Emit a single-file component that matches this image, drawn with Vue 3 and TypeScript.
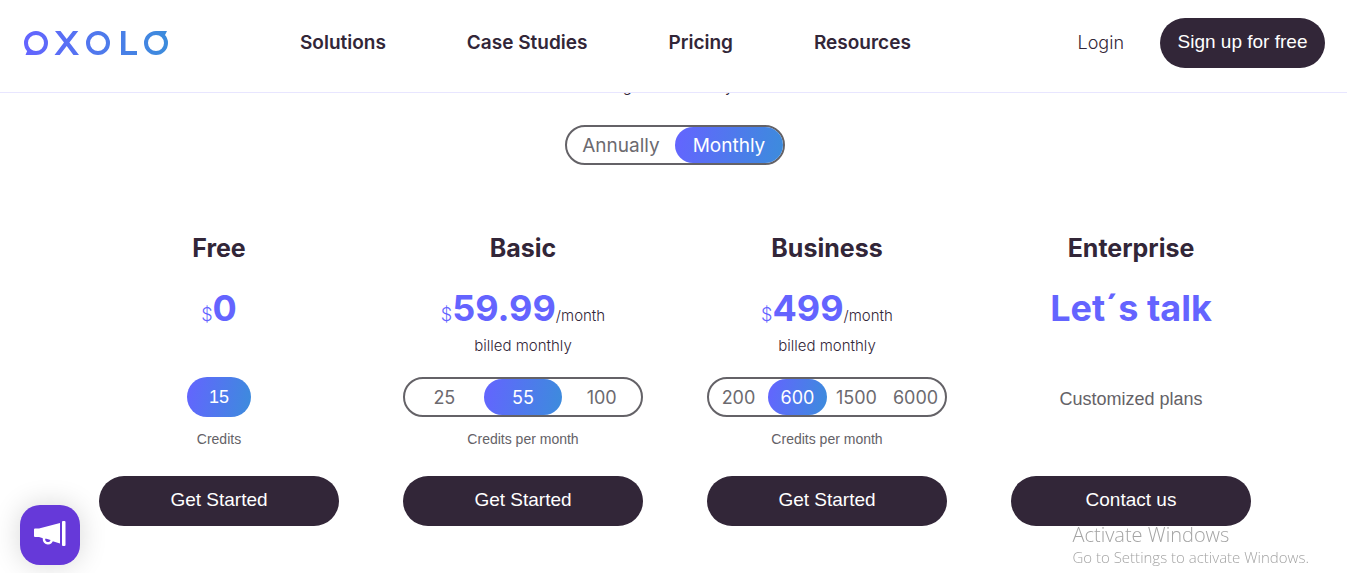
<script setup lang="ts">
import { ref } from 'vue'

interface Plan {
  id: string
  name: string
  currency?: string
  price: string
  period?: string
  billing?: string
  credits: number[]
  note: string
  action: string
}

const navigation = ['Solutions', 'Case Studies', 'Pricing', 'Resources']
const periods = ['Annually', 'Monthly']
const period = ref('Monthly')

const plans: Plan[] = [
  { id: 'free', name: 'Free', currency: '$', price: '0', credits: [15], note: 'Credits', action: 'Get Started' },
  { id: 'basic', name: 'Basic', currency: '$', price: '59.99', period: '/month', billing: 'billed monthly', credits: [25, 55, 100], note: 'Credits per month', action: 'Get Started' },
  { id: 'business', name: 'Business', currency: '$', price: '499', period: '/month', billing: 'billed monthly', credits: [200, 600, 1500, 6000], note: 'Credits per month', action: 'Get Started' },
  { id: 'enterprise', name: 'Enterprise', price: 'Let´s talk', credits: [], note: 'Customized plans', action: 'Contact us' },
]

const selected = ref<Record<string, number>>({ basic: 55, business: 600 })
</script>

<template>
  <div class="page">
    <header class="header">
      <a class="logo" href="#" aria-label="Oxolo">
        <svg width="144" height="24" viewBox="0 0 144 24" fill="none">
          <defs>
            <linearGradient id="brand" gradientUnits="userSpaceOnUse" x1="0" y1="0" x2="144" y2="0">
              <stop offset="0" stop-color="#6464ff" />
              <stop offset="1" stop-color="#3c8cdc" />
            </linearGradient>
          </defs>
          <g stroke="url(#brand)" stroke-width="4">
            <circle cx="12" cy="12" r="10" />
            <circle cx="74" cy="12" r="10" />
            <circle cx="132" cy="12" r="10" />
          </g>
          <g fill="url(#brand)">
            <path d="M12 24H1.500L4 18l3 1 5 2z" />
            <path d="M132 0h11l-3 6-3-2-5-1z" />
            <path d="M31 0h5.500l6.200 8.100L49 0h5.300l-8.900 11.500L55 24h-5.600l-6.700-9-7 9H30.500l9.500-12.500z" />
            <path d="M97 0h4.500v20H113v4H97z" />
          </g>
        </svg>
      </a>
      <nav class="nav">
        <a v-for="item in navigation" :key="item" href="#">{{ item }}</a>
      </nav>
      <div class="account">
        <a class="login" href="#">Login</a>
        <button class="button signup" type="button">Sign up for free</button>
      </div>
    </header>

    <main class="main">
      <p class="lead">Change or cancel anytime</p>

      <fieldset class="switch period-switch" aria-label="Billing period">
        <label v-for="option in periods" :key="option" class="option">
          <input v-model="period" type="radio" name="period" :value="option" />
          <span>{{ option }}</span>
        </label>
      </fieldset>

      <div class="plans">
        <section v-for="plan in plans" :key="plan.id" class="plan">
          <h2>{{ plan.name }}</h2>
          <p class="price">
            <span v-if="plan.currency" class="currency">{{ plan.currency }}</span><strong>{{ plan.price }}</strong><span v-if="plan.period" class="per">{{ plan.period }}</span>
          </p>
          <p class="billing">{{ plan.billing }}</p>
          <div class="allowance" :class="{ custom: !plan.credits.length }">
            <fieldset v-if="plan.credits.length > 1" class="switch" :aria-label="plan.name + ' credits'">
              <label v-for="amount in plan.credits" :key="amount" class="option">
                <input v-model="selected[plan.id]" type="radio" :name="plan.id" :value="amount" />
                <span>{{ amount }}</span>
              </label>
            </fieldset>
            <span v-else-if="plan.credits.length" class="badge">{{ plan.credits[0] }}</span>
            <p class="note">{{ plan.note }}</p>
          </div>
          <button class="button" type="button">{{ plan.action }}</button>
        </section>
      </div>
    </main>

    <button class="announce" type="button" aria-label="Announcements">
      <svg width="34" height="28" viewBox="0 0 34 28">
        <g fill="#fff">
          <path d="M1 8.500Q1 7.500 2 7.500H6L27 2v20.500L6 16H2q-1 0-1-1z" />
          <rect x="29" y="0" width="3.500" height="25" rx="1" />
        </g>
        <path d="M11 16.500v1.500a4 4 0 0 0 8 0.500" fill="none" stroke="#fff" stroke-width="2.500" />
        <path d="M12.500 17.500l5 1.500q-1 2-2.500 2-2.500-0.500-2.500-3.500z" fill="#6639d9" />
      </svg>
    </button>

    <aside class="watermark">
      <p class="watermark-title">Activate Windows</p>
      <p>Go to Settings to activate Windows.</p>
    </aside>
  </div>
</template>

<style>
body {
  margin: 0;
  background: #fff;
}
</style>

<style scoped>
.page {
  color: #322638;
  font-family: Inter, "Open Sans", sans-serif;
}

p, h2 {
  margin: 0;
}

a {
  color: inherit;
  text-decoration: none;
}

.header {
  position: sticky;
  top: 0;
  z-index: 2;
  display: flex;
  align-items: center;
  box-sizing: border-box;
  height: 93px;
  padding: 0 22px 7px 24px;
  background: #fff;
  border-bottom: 1px solid #e8e6ff;
}

.logo svg {
  display: block;
}

.nav {
  display: flex;
  gap: 81px;
  margin-left: 132px;
  font-size: 19px;
  font-weight: 600;
  line-height: 24px;
  white-space: nowrap;
}

.account {
  display: flex;
  align-items: center;
  gap: 36px;
  margin-left: auto;
}

.login {
  font-size: 18px;
  font-weight: 300;
}

.button {
  width: 100%;
  height: 50px;
  padding: 0 0 2px;
  border: 0;
  border-radius: 25px;
  background: #322638;
  color: #fff;
  font-family: "Liberation Sans", sans-serif;
  font-size: 19px;
  cursor: pointer;
}

.signup {
  width: 165px;
}

.main {
  display: flex;
  flex-direction: column;
  align-items: center;
  margin-top: -18px;
  padding: 0 96px 0 99px;
}

.lead {
  font-size: 14px;
  line-height: 24px;
}

.switch {
  display: flex;
  box-sizing: border-box;
  width: 100%;
  min-width: 0;
  height: 40px;
  margin: 0;
  padding: 0;
  border: 2px solid #646267;
  border-radius: 20px;
}

.period-switch {
  width: 220px;
  margin-top: 26px;
}

.period-switch .option {
  font-size: 19px;
}

.option {
  position: relative;
  flex: 1 1 0;
  min-width: 0;
  color: #6c6a6f;
  font-size: 18px;
  font-weight: 400;
  line-height: 38px;
  text-align: center;
  cursor: pointer;
}

.option input {
  position: absolute;
  inset: 0;
  margin: 0;
  opacity: 0;
}

.option span {
  display: block;
  height: 36px;
  border-radius: 18px;
}

.option input:checked + span {
  background: linear-gradient(100deg, #6464ff, #3c8cdc);
  color: #fff;
}

.plans {
  display: grid;
  grid-template-columns: repeat(4, minmax(0, 1fr));
  gap: 64px;
  width: 100%;
  margin-top: 65px;
}

.plan {
  display: flex;
  flex-direction: column;
  align-items: center;
  text-align: center;
}

h2 {
  font-size: 25px;
  font-weight: 700;
  line-height: 36px;
}

.price {
  height: 36px;
  margin-top: 24px;
  line-height: 36px;
  white-space: nowrap;
}

.price strong {
  color: #6464ff;
  font-size: 36px;
  font-weight: 700;
}

.currency {
  color: #6464ff;
  font-size: 18px;
  font-weight: 300;
}

.per {
  font-size: 15px;
  font-weight: 300;
}

.billing {
  height: 24px;
  margin-top: 8px;
  font-size: 15px;
  font-weight: 300;
  line-height: 24px;
}

.allowance {
  display: flex;
  flex-direction: column;
  align-items: center;
  width: 100%;
  height: 99px;
  margin-top: 19px;
}

.badge {
  width: 64px;
  border-radius: 20px;
  background: linear-gradient(100deg, #6464ff, #3c8cdc);
  color: #fff;
  font-family: "Liberation Sans", sans-serif;
  font-size: 18px;
  line-height: 40px;
}

.note {
  margin-top: 12px;
  color: #646267;
  font-family: "Liberation Sans", sans-serif;
  font-size: 14px;
  line-height: 20px;
}

.custom .note {
  font-size: 18px;
}

.announce {
  position: fixed;
  bottom: 8px;
  left: 20px;
  display: flex;
  align-items: center;
  justify-content: center;
  width: 60px;
  height: 60px;
  padding: 0;
  border: 0;
  border-radius: 20px;
  background: #6639d9;
  box-shadow: 0 0 28px rgba(0, 0, 0, 0.16);
}

.watermark {
  position: fixed;
  right: 38px;
  bottom: 6px;
  color: #a4a4a4;
  font-family: "Open Sans", sans-serif;
  font-size: 15px;
  font-weight: 300;
  line-height: 20px;
  pointer-events: none;
}

.watermark-title {
  font-size: 20px;
  line-height: 25px;
}
</style>
